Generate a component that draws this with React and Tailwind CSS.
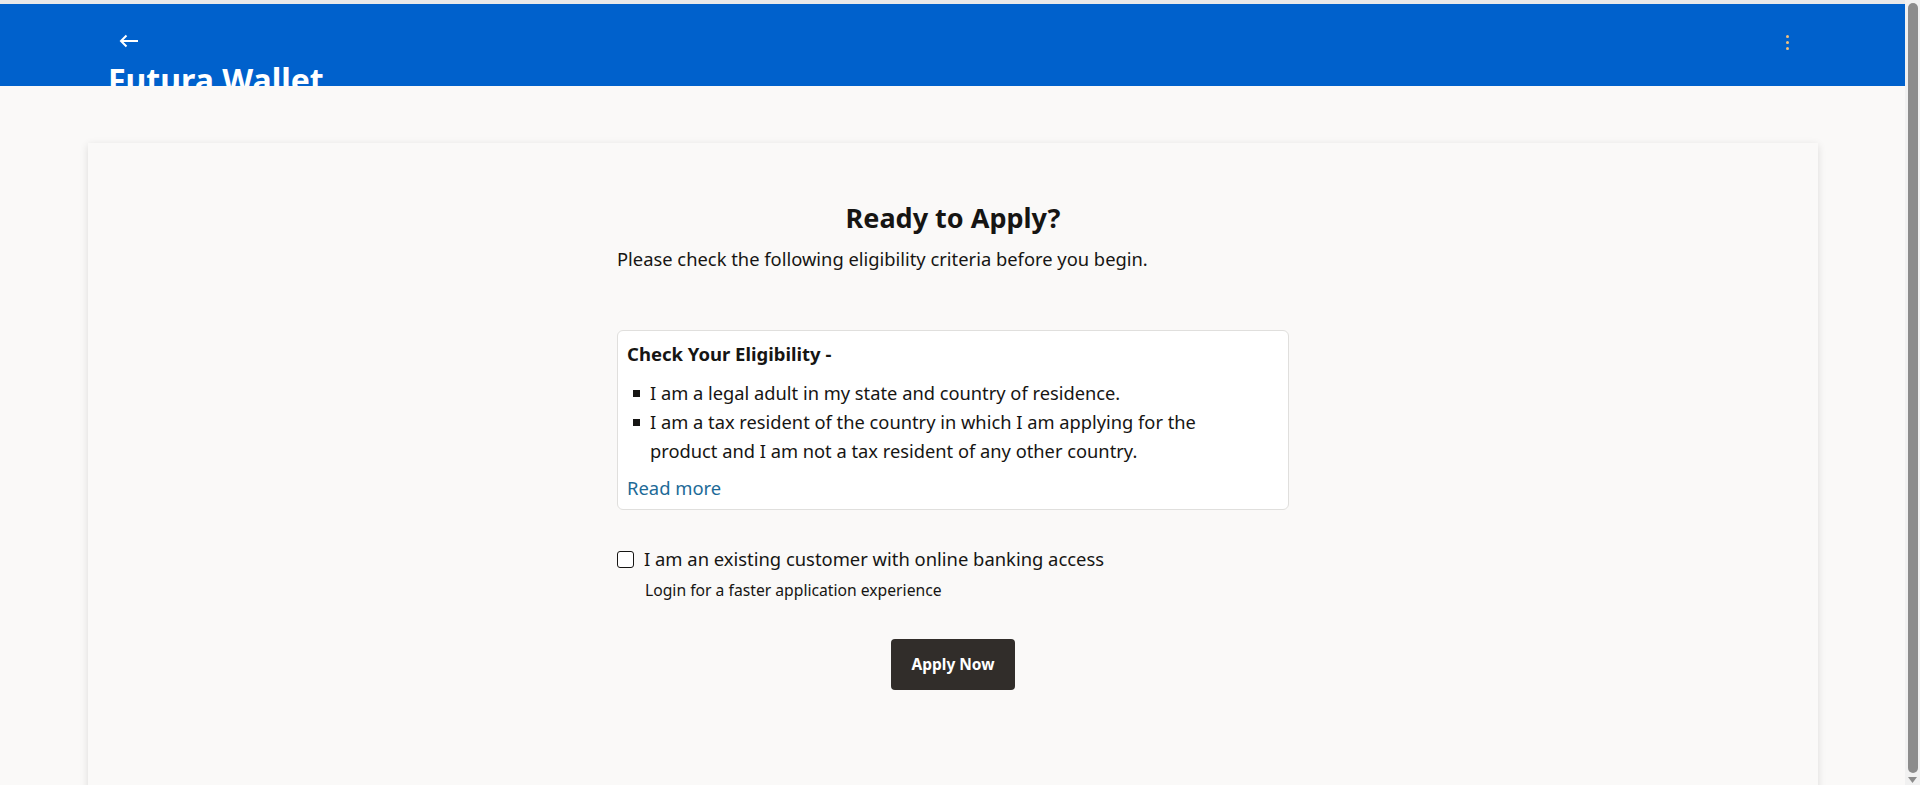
import React, { useState } from "react";

const font = { fontFamily: '"Noto Sans", "Open Sans", Arial, sans-serif' };

const Header = () => {
  return (
    <div className="pt-[4px] bg-[#e9e9e9]">
      <div className="h-[82px] bg-[#0061cc] overflow-hidden flex justify-between pl-[108px] pr-[115px]">
        <div className="flex flex-col">
          <button className="mt-[30px] ml-[11px] w-[24px] h-[24px] flex items-center text-white">
            <svg width="20" height="14" viewBox="0 0 20 14" fill="none">
              <path d="M19 7H2M7.5 1.5L2 7l5.5 5.5" stroke="white" strokeWidth="2" />
            </svg>
          </button>
          <h1 className="mt-[12px] text-[32px] font-bold leading-[40px] text-white whitespace-nowrap">
            Futura Wallet
          </h1>
        </div>
        <div className="mt-[31px] flex flex-col gap-[3px] items-center w-[6px]">
          <span className="w-[3px] h-[3px] rounded-full bg-[#f3c07c]" />
          <span className="w-[3px] h-[3px] rounded-full bg-[#f3c07c]" />
          <span className="w-[3px] h-[3px] rounded-full bg-[#f3c07c]" />
        </div>
      </div>
    </div>
  );
};

const Scrollbar = () => (
  <div className="w-[15px] shrink-0 bg-[#f1f1f1] flex flex-col items-center pt-[3px] pb-[2px]">
    <div className="w-[10px] flex-1 rounded-[5px] bg-[#8c8c8c]" />
    <svg width="9" height="6" viewBox="0 0 9 6" className="mt-[4px]">
      <path d="M0 0h9L4.5 6z" fill="#8c8c8c" />
    </svg>
  </div>
);

const criteria = [
  "I am a legal adult in my state and country of residence.",
  "I am a tax resident of the country in which I am applying for the product and I am not a tax resident of any other country.",
];

export default function App() {
  const [existing, setExisting] = useState(false);

  return (
    <div className="h-[785px] overflow-hidden flex bg-[#faf9f8] text-[#161513]" style={font}>
      <div className="flex-1 min-w-0">
        <Header />
        <div className="pt-[57px] pl-[88px] pr-[87px]">
          <div className="min-h-[700px] bg-[#faf9f8] shadow-[0_2px_8px_rgba(0,0,0,0.12)] pt-[57px] pb-[80px]">
            <h2 className="text-center text-[27px] font-bold leading-[36px]">Ready to Apply?</h2>
            <div className="w-[672px] mx-auto">
              <p className="mt-[10px] text-[18.35px] leading-[26px]">
                Please check the following eligibility criteria before you begin.
              </p>

              <div className="mt-[58px] bg-white border border-[#e0dfdd] rounded-[6px] px-[9px] pt-[8px] pb-[7px]">
                <h3 className="text-[18.5px] font-bold leading-[30px]">Check Your Eligibility -</h3>
                <ul className="mt-[9px]">
                  {criteria.map((c) => (
                    <li key={c} className="flex text-[18.3px] leading-[29px]">
                      <span className="w-[7px] h-[7px] bg-[#161513] mt-[12px] ml-[6px] mr-[10px] shrink-0" />
                      <span className="max-w-[580px]">{c}</span>
                    </li>
                  ))}
                </ul>
                <a href="#" className="block mt-[8px] text-[18.4px] leading-[29px] text-[#1d6a97]">
                  Read more
                </a>
              </div>

              <label className="mt-[36px] flex items-center gap-[10px] cursor-pointer">
                <input
                  type="checkbox"
                  checked={existing}
                  onChange={(e) => setExisting(e.target.checked)}
                  className="appearance-none w-[17px] h-[17px] border-[1.5px] border-[#161513] rounded-[3px] bg-white checked:bg-[#161513]"
                />
                <span className="text-[18.4px] leading-[26px]">I am an existing customer with online banking access</span>
              </label>
              <p className="ml-[28px] mt-[7px] text-[15.7px] leading-[23px]">
                Login for a faster application experience
              </p>

              <div className="mt-[37px] flex justify-center">
                <button className="h-[51px] px-[20px] bg-[#312d2a] text-white rounded-[4px] text-[15.5px] font-bold">
                  Apply Now
                </button>
              </div>
            </div>
          </div>
        </div>
      </div>
      <Scrollbar />
    </div>
  );
}
